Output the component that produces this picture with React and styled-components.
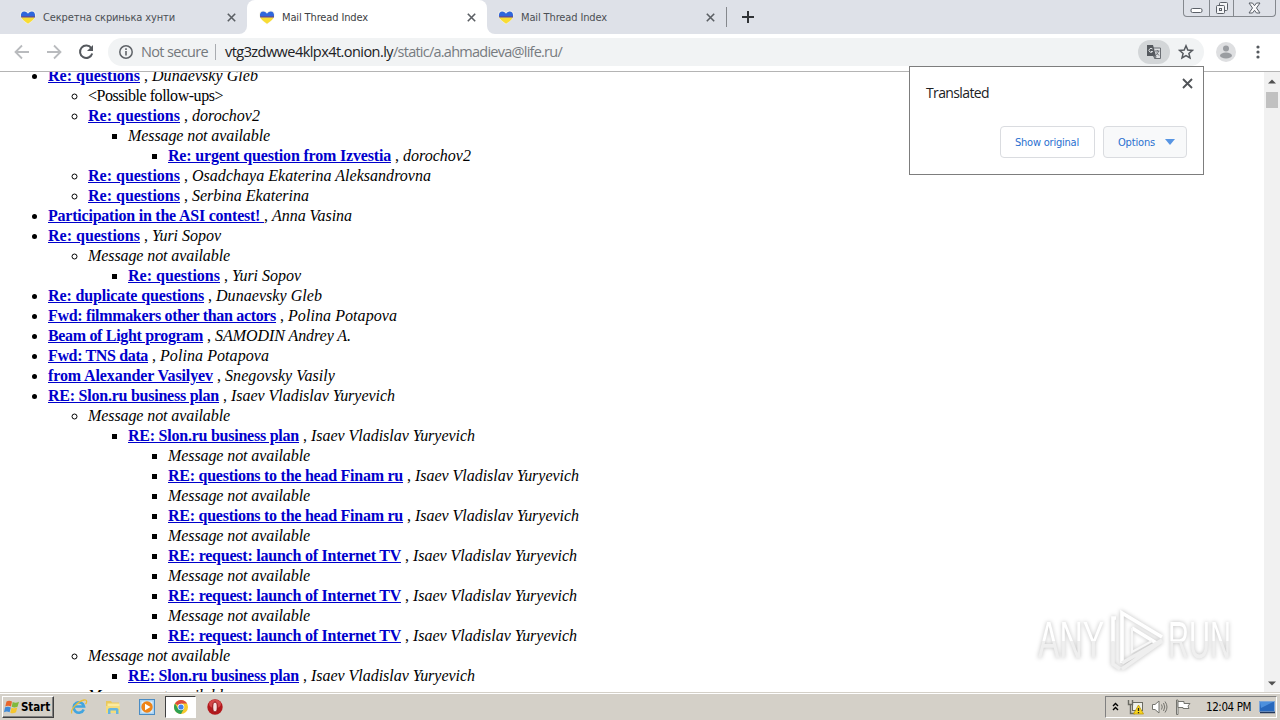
import React, { useLayoutEffect, useRef, useState } from "react";
import styled, { createGlobalStyle } from "styled-components";

const Global = createGlobalStyle`
  * { box-sizing: border-box; }
  html, body { margin: 0; height: 100%; overflow: hidden; background: #fff; }
`;

const ui = `"DejaVu Sans Condensed", "DejaVu Sans", sans-serif`;

const Window = styled.div`
  position: relative;
  width: 1280px;
  height: 720px;
  display: flex;
  flex-direction: column;
  overflow: hidden;
  font-family: ${ui};
  svg { display: block; flex: none; }
`;

const FitText = styled.span`
  display: inline-block;
  white-space: pre;
  width: ${(p) => p.$w}px;
`;

/* Spreads its letters so that the text is exactly w pixels wide. */
function Fit({ w, children }) {
  const ref = useRef(null);
  const [tracking, setTracking] = useState(0);
  useLayoutEffect(() => {
    const natural = ref.current.getBoundingClientRect().width;
    setTracking((w - natural) / String(children).length);
  }, [w, children]);
  return (
    <FitText $w={w}>
      <span ref={ref} style={{ letterSpacing: tracking }}>{children}</span>
    </FitText>
  );
}

/* ---------- tab strip ---------- */
const TabStrip = styled.div`
  display: flex;
  height: 34px;
  flex: none;
  background: #dee1e8;
`;
const Tab = styled.div`
  display: flex;
  align-items: center;
  width: ${(p) => p.$w}px;
  padding: 0 11px 0 ${(p) => p.$pad}px;
  gap: 7px;
  font-size: 11px;
  color: ${(p) => (p.$active ? "#3c4043" : "#4b4f54")};
  background: ${(p) => (p.$active ? "#fff" : "#dee1e8")};
  border-radius: ${(p) => (p.$active ? "8px 8px 0 0" : p.$round)};
`;
const TabBack = styled.div`
  display: flex;
  background: #fff;
`;
const ActiveBack = styled.div`
  display: flex;
  background: #dee1e8;
`;
const TabTitle = styled.div`
  flex: 1;
`;
const Divider = styled.div`
  width: 1px;
  height: 20px;
  background: #85888d;
  align-self: center;
`;
const NewTab = styled.div`
  display: flex;
  align-items: center;
  padding-left: 14px;
  flex: 1;
`;
const WindowButtons = styled.div`
  display: flex;
  width: 93px;
  height: 17px;
  margin-right: 4px;
  border: 1px solid #84888e;
  border-top: 0;
  border-radius: 0 0 4px 4px;
`;
const WindowButton = styled.div`
  display: flex;
  align-items: center;
  justify-content: center;
  width: ${(p) => p.$w}px;
  border-left: ${(p) => (p.$first ? "0" : "1px solid #84888e")};
`;

const Heart = () => (
  <svg width="16" height="16" viewBox="0 0 16 16">
    <path d="M8 15.4C3 11.500 .3 9 .3 5.400.3 2.800 2.200 1.600 4.200 1.600 6 1.600 7.300 2.500 8 3.700 8.700 2.500 10 1.600 11.800 1.600 13.800 1.600 15.700 2.800 15.700 5.400 15.700 9 13 11.500 8 15.400Z" fill="#f5f3ea" />
    <path d="M1 7.500C.6 4.300 1.900 2.400 4.200 2.400 6 2.400 7.400 3.500 8 4.700 8.600 3.500 10 2.400 11.800 2.400 14.100 2.400 15.400 4.300 15 7.500Z" fill="#2f66dc" />
    <path d="M1 7.500H15C14.500 10 12 12.200 8 14.700 4 12.200 1.500 10 1 7.500Z" fill="#f8dc34" />
    <path d="M1 7H15V8.600H1.300Z" fill="#5a4fa0" />
  </svg>
);
const Cross = ({ s = 9, c = "#5b5f64", w = 1.6 }) => (
  <svg width={s} height={s} viewBox="0 0 9 9">
    <path d="M.8 .8 8.200 8.200M8.200 .8 .8 8.200" stroke={c} strokeWidth={w} fill="none" />
  </svg>
);

/* ---------- toolbar ---------- */
const Toolbar = styled.div`
  display: flex;
  align-items: center;
  height: 38px;
  flex: none;
  padding: 0 14px 2px;
  background: #fff;
  border-bottom: 1px solid #b4b4b4;
`;
const NavIcons = styled.div`
  display: flex;
  gap: 16px;
  width: 94px;
`;
const Omnibox = styled.div`
  display: flex;
  align-items: center;
  width: 1096px;
  height: 28px;
  padding: 0 10px;
  border-radius: 14px;
  background: #f1f3f4;
  font: 14.500px/20px "Open Sans", "Noto Sans", sans-serif;
  white-space: pre;
`;
const Security = styled.div`
  width: 67px;
  margin-left: 7px;
  color: #74787c;
`;
const SecurityDivider = styled.div`
  width: 1px;
  height: 16px;
  margin-left: 7px;
  background: #a9acb0;
`;
const Url = styled.div`
  flex: 1;
  margin-left: 9px;
  color: #202124;
`;
const Path = styled.span`
  color: #777b80;
`;
const TranslatePill = styled.div`
  display: flex;
  align-items: center;
  justify-content: center;
  width: 32px;
  height: 24px;
  margin-right: 8px;
  border-radius: 12px;
  background: #d3d6d8;
`;
const RightIcons = styled.div`
  display: flex;
  align-items: center;
  gap: 20px;
  margin-left: 12px;
`;

/* ---------- page ---------- */
const Page = styled.div`
  display: flex;
  height: 620px;
  flex: none;
  overflow: hidden;
  background: #fff;
`;
const Thread = styled.div`
  flex: 1;
  overflow: hidden;
  font: 16px/20px "Liberation Serif", serif;
  color: #000;
`;
const List = styled.ul`
  margin: ${(p) => (p.$root ? "-6px 0 0" : "0")};
  padding-left: ${(p) => (p.$root ? 48 : 40)}px;
  list-style-type: ${(p) => p.$bullet};
`;
const Item = styled.li`
  line-height: 20px;
  white-space: pre;
`;
const Subject = styled.a`
  display: inline-block;
  height: 20px;
  color: #0000cc;
  font-weight: bold;
  text-decoration: underline;
  span { text-decoration: underline; }
`;
const Author = styled.i`
  font-style: italic;
`;
const Scrollbar = styled.div`
  display: flex;
  flex-direction: column;
  align-items: center;
  width: 16px;
  padding: 7px 0 6px;
  background: #f1f1f1;
`;
const Thumb = styled.div`
  width: 12px;
  height: 16px;
  margin: 8px 0 auto;
  background: #c1c1c1;
`;

const NA = "Message not available";
const isaev = ["Isaev Vladislav Yuryevich", 164];
const q = ["Re: questions", 92];
const slon = ["RE: Slon.ru business plan", 171];
const finam = ["RE: questions to the head Finam ru", 235];
const tv = ["RE: request: launch of Internet TV", 233];
const missing = (kids) => ({ note: NA, kids });
const mail = (s, a, kids) => ({ s, a, kids });

const threads = [
  mail(q, ["Dunaevsky Gleb", 106], [
    { plain: "<Possible follow-ups>" },
    mail(q, ["dorochov2", 68], [missing([mail(["Re: urgent question from Izvestia", 223], ["dorochov2", 68])])]),
    mail(q, ["Osadchaya Ekaterina Aleksandrovna", 239]),
    mail(q, ["Serbina Ekaterina", 117]),
  ]),
  mail(["Participation in the ASI contest! ", 216, true], ["Anna Vasina", 80]),
  mail(q, ["Yuri Sopov", 69], [missing([mail(q, ["Yuri Sopov", 69])])]),
  mail(["Re: duplicate questions", 156], ["Dunaevsky Gleb", 106]),
  mail(["Fwd: filmmakers other than actors", 228], ["Polina Potapova", 109]),
  mail(["Beam of Light program", 155], ["SAMODIN Andrey A.", 136]),
  mail(["Fwd: TNS data", 100], ["Polina Potapova", 109]),
  mail(["from Alexander Vasilyev", 165], ["Snegovsky Vasily", 110]),
  mail(slon, isaev, [
    missing([
      mail(slon, isaev, [
        missing(), mail(finam, isaev),
        missing(), mail(finam, isaev),
        missing(), mail(tv, isaev),
        missing(), mail(tv, isaev),
        missing(), mail(tv, isaev),
      ]),
    ]),
    missing([mail(slon, isaev)]),
    missing(),
  ]),
];

function Tree({ items, depth = 0 }) {
  return (
    <List $root={depth === 0} $bullet={["disc", "circle", "square"][Math.min(depth, 2)]}>
      {items.map((it, i) => (
        <Item key={i}>
          {it.plain && <Fit w={135}>{it.plain}</Fit>}
          {it.note && <Author><Fit w={142}>{it.note}</Fit></Author>}
          {it.s && (
            <>
              <Subject><Fit w={it.s[1]}>{it.s[0]}</Fit></Subject>
              {it.s[2] ? ", " : " , "}
              <Author><Fit w={it.a[1]}>{it.a[0]}</Fit></Author>
            </>
          )}
          {it.kids && <Tree items={it.kids} depth={depth + 1} />}
        </Item>
      ))}
    </List>
  );
}

/* ---------- translate bubble ---------- */
const Bubble = styled.div`
  position: absolute;
  left: 909px;
  top: 66px;
  width: 295px;
  height: 109px;
  padding: 11px 16px 16px;
  display: flex;
  flex-direction: column;
  justify-content: space-between;
  background: #fff;
  border: 1px solid #7d7d7d;
`;
const BubbleHead = styled.div`
  display: flex;
  justify-content: space-between;
  font: 14px/30px "Open Sans", "Noto Sans", sans-serif;
  color: #202124;
  svg { margin-right: -6px; }
`;
const BubbleActions = styled.div`
  display: flex;
  justify-content: flex-end;
  gap: 8px;
`;
const BubbleButton = styled.div`
  display: flex;
  align-items: center;
  padding-left: 14px;
  gap: 10px;
  width: ${(p) => p.$w}px;
  height: 32px;
  border: 1px solid #dadce0;
  border-radius: 4px;
  background: ${(p) => (p.$shade ? "#f8f9fa" : "#fff")};
  color: #2a70d0;
  font-size: 11px;
`;

/* ---------- watermark ---------- */
const Watermark = styled.div`
  position: absolute;
  left: 1038px;
  top: 606px;
  display: flex;
  align-items: center;
  width: 200px;
  height: 70px;
  filter: drop-shadow(0 0 2px rgba(0, 0, 0, 0.26));
`;
const Word = styled.div`
  width: ${(p) => p.$w}px;
  font: 51px/70px "Liberation Sans", sans-serif;
  white-space: nowrap;
  color: transparent;
  background: linear-gradient(#fff 50%, #efefef 50%);
  background-clip: text;
  -webkit-background-clip: text;
`;
const Squeeze = styled.div`
  flex: none;
  width: ${(p) => p.$w}px;
  > div {
    transform: scaleX(${(p) => p.$scale});
    transform-origin: left center;
  }
`;

/* ---------- taskbar ---------- */
const Taskbar = styled.div`
  display: flex;
  align-items: center;
  justify-content: space-between;
  height: 28px;
  flex: none;
  padding: 2px 3px 2px 2px;
  background: #d4d0c8;
  border-top: 1px solid #d4d0c8;
  box-shadow: inset 0 1px #fff;
`;
const Launchers = styled.div`
  display: flex;
  align-items: center;
`;
const Start = styled.div`
  display: flex;
  align-items: center;
  gap: 1px;
  width: 52px;
  height: 22px;
  padding-left: 1px;
  margin-right: 8px;
  border: 1px solid;
  border-color: #fff #404040 #404040 #fff;
  box-shadow: inset -1px -1px #808080;
  font: bold 11.500px ${ui};
  color: #000;
`;
const Launch = styled.div`
  display: flex;
  align-items: center;
  justify-content: center;
  width: ${(p) => (p.$active ? 31 : 34)}px;
  height: 22px;
  margin: ${(p) => (p.$active ? "0 2px 0 1px" : "0")};
  background: ${(p) => (p.$active ? "#fff" : "none")};
  border: 1px solid;
  border-color: ${(p) => (p.$active ? "#404040 #fff #fff #404040" : "transparent")};
`;
const Tray = styled.div`
  display: flex;
  align-items: center;
  width: 172px;
  height: 22px;
  padding-left: 6px;
  border: 1px solid;
  border-color: #808080 #fff #fff #808080;
  font-size: 11.500px;
  color: #000;
`;
const TrayIcons = styled.div`
  display: flex;
  gap: 7px;
  margin-left: 7px;
`;
const Clock = styled.div`
  margin: 0 8px 0 15px;
`;

export default function App() {
  return (
    <Window>
      <Global />
      <TabStrip>
        <TabBack>
          <Tab $w={247} $pad={20} $round="0 0 8px 0">
            <Heart />
            <TabTitle><Fit w={132}>Секретна скринька хунти</Fit></TabTitle>
            <Cross />
          </Tab>
        </TabBack>
        <ActiveBack>
          <Tab $w={240} $pad={12} $active>
            <Heart />
            <TabTitle><Fit w={86}>Mail Thread Index</Fit></TabTitle>
            <Cross />
          </Tab>
        </ActiveBack>
        <TabBack>
          <Tab $w={239} $pad={11} $round="0 0 0 8px">
            <Heart />
            <TabTitle><Fit w={86}>Mail Thread Index</Fit></TabTitle>
            <Cross />
          </Tab>
        </TabBack>
        <Divider />
        <NewTab>
          <svg width="14" height="14" viewBox="0 0 14 14">
            <path d="M7 1V13M1 7H13" stroke="#303336" strokeWidth="2" />
          </svg>
        </NewTab>
        <WindowButtons>
          <WindowButton $w={25} $first>
            <svg width="13" height="15" viewBox="0 0 13 15">
              <rect x="1" y="7.500" width="11" height="4" rx="1.500" fill="#fff" stroke="#5b6068" />
            </svg>
          </WindowButton>
          <WindowButton $w={25}>
            <svg width="14" height="16" viewBox="0 0 14 16" fill="#f4f5f7" stroke="#5b6068">
              <rect x="4.500" y="2.500" width="8" height="8" rx="1" />
              <rect x="1.500" y="5.500" width="8" height="8" rx="1" />
              <rect x="4.500" y="8.500" width="2" height="2" />
            </svg>
          </WindowButton>
          <WindowButton $w={42}>
            <svg width="13" height="14" viewBox="0 0 13 14">
              <path d="M1 2H4.500L6.500 4.700 8.500 2H12L8.500 7 12 12H8.500L6.500 9.300 4.500 12H1L4.500 7Z" fill="#f8f8fa" stroke="#5b6068" />
            </svg>
          </WindowButton>
        </WindowButtons>
      </TabStrip>

      <Toolbar>
        <NavIcons>
          <svg width="16" height="16" viewBox="0 0 16 16" fill="none" stroke="#b9bbbe" strokeWidth="1.800">
            <path d="M15 8H2M8 1.500 1.500 8 8 14.500" />
          </svg>
          <svg width="16" height="16" viewBox="0 0 16 16" fill="none" stroke="#b9bbbe" strokeWidth="1.800">
            <path d="M1 8H14M8 1.500 14.500 8 8 14.500" />
          </svg>
          <svg width="16" height="16" viewBox="0 0 16 16">
            <path d="M13.300 4.200A6.200 6.200 0 1 0 14.200 9.500" fill="none" stroke="#55595e" strokeWidth="2" />
            <path d="M15 1V7H9Z" fill="#55595e" />
          </svg>
        </NavIcons>
        <Omnibox>
          <svg width="16" height="16" viewBox="0 0 16 16">
            <circle cx="8" cy="8" r="6.200" fill="none" stroke="#5f6368" strokeWidth="1.500" />
            <path d="M8 7V11.500M8 4.300V6" stroke="#5f6368" strokeWidth="1.600" />
          </svg>
          <Security><Fit w={67}>Not secure</Fit></Security>
          <SecurityDivider />
          <Url><Fit w={168}>vtg3zdwwe4klpx4t.onion.ly</Fit><Path><Fit w={169}>/static/a.ahmadieva@life.ru/</Fit></Path></Url>
          <TranslatePill>
            <svg width="16" height="16" viewBox="0 0 16 16">
              <path d="M6.500 4H14.500V14.500H8.500Z" fill="#dfe1e3" stroke="#6b6f74" />
              <path d="M1 1H7L10 12H1Z" fill="#55595e" />
              <path d="M6.500 5A2 2 0 1 0 6.700 7.500H5" fill="none" stroke="#dfe1e3" />
              <path d="M9 7H13.500M11.300 6V7M12.500 7C12 9 11 10.500 10 11M10.300 8.500 13 11.500M7.500 12 9.500 14.500 10 12Z" fill="none" stroke="#6b6f74" />
            </svg>
          </TranslatePill>
          <svg width="16" height="16" viewBox="0 0 16 16">
            <path d="M8 1.800 9.800 6 14.400 6.400 10.900 9.400 12 13.900 8 11.500 4 13.900 5.100 9.400 1.600 6.400 6.200 6Z" fill="none" stroke="#55595e" strokeWidth="1.500" />
          </svg>
        </Omnibox>
        <RightIcons>
          <svg width="20" height="20" viewBox="0 0 20 20">
            <circle cx="10" cy="10" r="10" fill="#dedfe1" />
            <circle cx="10" cy="6.500" r="3" fill="#9a9da1" />
            <ellipse cx="10" cy="13.500" rx="6" ry="3" fill="#9a9da1" />
          </svg>
          <svg width="4" height="14" viewBox="0 0 4 14" fill="#55595e">
            <circle cx="2" cy="2" r="1.600" /><circle cx="2" cy="7" r="1.600" /><circle cx="2" cy="12" r="1.600" />
          </svg>
        </RightIcons>
      </Toolbar>

      <Page>
        <Thread><Tree items={threads} /></Thread>
        <Scrollbar>
          <svg width="8" height="5" viewBox="0 0 8 5"><path d="M0 4.500 4 .5 8 4.500Z" fill="#505050" /></svg>
          <Thumb />
          <svg width="8" height="5" viewBox="0 0 8 5"><path d="M0 .5 4 4.500 8 .5Z" fill="#505050" /></svg>
        </Scrollbar>
      </Page>

      <Taskbar>
        <Launchers>
          <Start>
            <svg width="16" height="16" viewBox="0 0 16 16">
              <path d="M2.500 2.500Q5 .8 8 2.500L7 7.500Q4 6 1.300 7.500Z" fill="#e8662c" />
              <path d="M8.700 3Q11.500 4.500 15 2.800L13.500 7.700Q10.500 9 7.700 7.800Z" fill="#80b93c" />
              <path d="M1.100 8.300Q4 7 6.800 8.400L5.600 13.300Q3 12 0 13.200Z" fill="#3f8ad8" />
              <path d="M7.500 8.700Q10.500 10 13.300 8.600L12 13.300Q9 15 6.300 13.700Z" fill="#f5c62f" />
            </svg>
            <Fit w={29}>Start</Fit>
          </Start>
          <Launch>
            <svg width="18" height="18" viewBox="0 0 18 18">
              <path d="M13.700 11.500A5.200 5.200 0 1 1 14 8.500H5" fill="none" stroke="#42a5df" strokeWidth="2.600" />
              <path d="M2 15.500C-1 13 8 3 14 2 18 1.300 16.500 5 15.500 6.200" fill="none" stroke="#e9bd37" strokeWidth="1.300" />
            </svg>
          </Launch>
          <Launch>
            <svg width="16" height="16" viewBox="0 0 16 16">
              <path d="M1 2H6L7 3.500H14V14H1Z" fill="#e9c85c" />
              <path d="M2.500 4.500H14.500V9H2.500Z" fill="#fbea9f" />
              <path d="M1 7H15V14H1Z" fill="#f4dc7c" />
              <path d="M3 15V10.500Q3 9 5 9H11.500Q13.500 9 13.500 10.500V15H11V11.500H5.500V15Z" fill="#65b5df" />
            </svg>
          </Launch>
          <Launch>
            <svg width="16" height="16" viewBox="0 0 16 16">
              <rect x=".5" y=".5" width="15" height="15" fill="#a9d2f2" stroke="#4a8cc4" />
              <rect x="2.500" y="2.500" width="11" height="11" fill="#e3f1fb" />
              <circle cx="8" cy="8" r="5.700" fill="#ee8419" />
              <path d="M6 4.800 11.500 8 6 11.200Z" fill="#fff" />
            </svg>
          </Launch>
          <Launch $active>
            <svg width="14" height="14" viewBox="0 0 14 14">
              <circle cx="7" cy="7" r="7" fill="#f7c92d" />
              <path d="M7 7 .95 3.500A7 7 0 0 1 13.060 3.500L7 3.600Z" fill="#dd4b3e" />
              <path d="M.95 3.500A7 7 0 0 0 7 14L9.900 8.700 7 7 4 8.500Z" fill="#2ea153" />
              <circle cx="7" cy="7" r="3.300" fill="#fff" />
              <circle cx="7" cy="7" r="2.600" fill="#4384ec" />
            </svg>
          </Launch>
          <Launch>
            <svg width="16" height="16" viewBox="0 0 16 16">
              <circle cx="8" cy="8" r="7.700" fill="#b3181c" />
              <ellipse cx="8" cy="5" rx="6" ry="4.200" fill="#d4484a" />
              <ellipse cx="8" cy="8" rx="2.300" ry="5" fill="#f7dfdf" stroke="#8f1115" />
            </svg>
          </Launch>
        </Launchers>
        <Tray>
          <svg width="8" height="10" viewBox="0 0 8 10" fill="none" stroke="#000" strokeWidth="1.400">
            <path d="M1 4 3.500 1.500 6 4M1 8 3.500 5.500 6 8" />
          </svg>
          <TrayIcons>
            <svg width="17" height="16" viewBox="0 0 17 16">
              <rect x="5.500" y="3.500" width="10" height="8" fill="#eef0ea" stroke="#6a6a62" />
              <path d="M1.500 1V5.500H5.500V1M3.500 5.500V14.500H8" fill="none" stroke="#6a6a62" strokeWidth="1.400" />
              <path d="M11.500 6 16.500 15H6.500Z" fill="#f8d51d" stroke="#b89100" strokeWidth=".7" />
              <path d="M11.500 9V12M11.500 13V14.200" stroke="#222" strokeWidth="1.300" />
            </svg>
            <svg width="17" height="16" viewBox="0 0 17 16" fill="none" stroke="#74746e">
              <path d="M1.500 5.500H4L8 2V14L4 10.500H1.500Z" fill="#fff" />
              <path d="M10.500 5.500Q12 8 10.500 10.500M12.500 4Q15 8 12.500 12M14 2.500Q18 8 14 13.500" />
            </svg>
            <svg width="16" height="16" viewBox="0 0 16 16" fill="#fff" stroke="#74746e">
              <path d="M1.500 1V15.500H3V1Z" />
              <path d="M3 2.500H9V4.500H15L13 7 14 9.500H8V8.500H3Z" />
            </svg>
          </TrayIcons>
          <Clock><Fit w={45}>12:04 PM</Fit></Clock>
          <svg width="16" height="14" viewBox="0 0 16 14">
            <rect x=".5" y="1.500" width="15" height="10" fill="#2868bd" stroke="#7ca5d8" />
            <path d="M1 2H14L2 8Z" fill="#4d90dd" />
            <path d="M1 12.500H16" stroke="#20365c" strokeWidth="1.500" />
          </svg>
        </Tray>
      </Taskbar>

      <Bubble>
        <BubbleHead>
          <Fit w={63}>Translated</Fit>
          <Cross s={11} w={1.5} c="#505357" />
        </BubbleHead>
        <BubbleActions>
          <BubbleButton $w={95}><Fit w={64}>Show original</Fit></BubbleButton>
          <BubbleButton $w={84} $shade>
            <Fit w={37}>Options</Fit>
            <svg width="10" height="6" viewBox="0 0 10 6"><path d="M0 0H10L5 6Z" fill="#5795e3" /></svg>
          </BubbleButton>
        </BubbleActions>
      </Bubble>

      <Watermark>
        <Squeeze $w={70} $scale={0.63}><Word $w={104}>ANY</Word></Squeeze>
        <svg width="60" height="70" viewBox="0 0 60 70" fill="none" strokeWidth="3.600">
          <path d="M14 57V7L54 31M24 22 50 38M5 36V12H8" stroke="#fff" />
          <path d="M14 57 54 34M54 35 14 63M5 35V58L12 63" stroke="#efefef" />
          <path d="M24 22V46L44 35" stroke="#f7f7f7" strokeWidth="2" />
        </svg>
        <Squeeze $w={66} $scale={0.57}><Word $w={112}>RUN</Word></Squeeze>
      </Watermark>
    </Window>
  );
}
